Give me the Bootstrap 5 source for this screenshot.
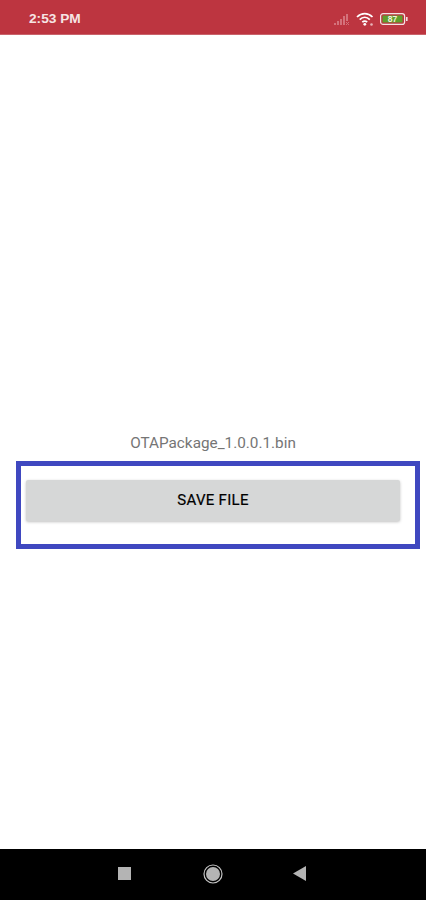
<!DOCTYPE html>
<html lang="en">
<head>
    <meta charset="UTF-8">
    <meta name="viewport" content="width=device-width, initial-scale=1.0">
    <link href="https://cdn.jsdelivr.net/npm/bootstrap@5.3.0/dist/css/bootstrap.min.css" rel="stylesheet">
    <title>Save File</title>

    <style>
        html, body { height: 900px; overflow: hidden; }
        body { font-family: Roboto, "Liberation Sans", sans-serif; background: #fff; }
        .phone { height: 900px; }
        .status-strip {
            height: 35px;
            background: #bd3540;
            color: #f6e4e4;
            font-family: "Liberation Sans", Arial, sans-serif;
            font-size: 13.7px;
            font-weight: 700;
            padding: 4px 18px 0 29px;
            border-bottom: 1px solid #c9636b;
        }
        .status-icons { gap: 5px; }
        .main-area { height: 814px; padding-top: 398px; }
        .file-name { color: #757575; font-size: 15.3px; font-weight: 400; line-height: 20px; height: 28px; }
        .focus-box {
            width: 404px;
            height: 88px;
            margin-left: 16px;
            border: 5px solid #3f48c0;
            padding: 14px 15px 0 5px;
        }
        .save-btn {
            height: 41px;
            background: #d6d7d7;
            border: 0;
            border-radius: 2px;
            box-shadow: 0 1px 3px rgba(0, 0, 0, .25);
            color: #000;
            font-size: 15px;
            font-weight: 400;
            letter-spacing: .3px;
            -webkit-text-stroke: .2px #000;
        }
        .nav-strip { height: 51px; background: #000; padding: 0 120px 2px 118px; }
        .nav-home { margin-left: 2px; }
    </style>
</head>
<body>
<div class="phone d-flex flex-column">
    <div class="status-strip d-flex align-items-center justify-content-between">
        <span>2:53 PM</span>
        <div class="status-icons d-flex align-items-center">
            <svg width="17" height="13" viewBox="0 0 17 13">
                <g fill="#d4727b">
                    <rect x="0" y="10" width="2" height="2"/>
                    <rect x="3" y="8" width="2" height="4"/>
                    <rect x="6" y="6" width="2" height="6"/>
                    <rect x="9" y="3" width="2" height="9"/>
                    <rect x="12" y="1" width="2" height="7"/>
                </g>
                <path d="M12 9l3 3M15 9l-3 3" stroke="#d4727b" stroke-width="1"/>
            </svg>
            <svg width="19" height="14" viewBox="0 0 19 14">
                <g fill="none" stroke="#fff" stroke-width="1.7">
                    <path d="M1 5c4.500-4.500 11-4.500 15.500 0"/>
                    <path d="M3.700 7.700c3-3 7.100-3 10.100 0"/>
                    <path d="M6.300 10.200c1.500-1.400 3.400-1.400 4.900 0"/>
                </g>
                <circle cx="8.800" cy="12.300" r="1.400" fill="#fff"/>
                <circle cx="15.500" cy="12.500" r="1.300" fill="#e9b4b8"/>
            </svg>
            <svg width="28" height="12" viewBox="0 0 28 12">
                <rect x=".6" y=".6" width="24" height="10.800" rx="2.500" fill="none" stroke="#f4e3e3" stroke-width="1.200"/>
                <rect x="2.500" y="2.500" width="20" height="7" fill="#5f9e2c"/>
                <rect x="26" y="4" width="1.600" height="4" fill="#f4e3e3"/>
                <text x="12.500" y="9" text-anchor="middle" font-family="Liberation Sans, sans-serif" font-size="8.500" font-weight="700" fill="#f2f2dc">87</text>
            </svg>
        </div>
    </div>

    <div class="main-area">
        <div class="file-name text-center">OTAPackage_1.0.0.1.bin</div>
        <div class="focus-box">
            <button type="button" class="btn save-btn w-100 d-flex align-items-center justify-content-center">SAVE FILE</button>
        </div>
    </div>

    <div class="nav-strip d-flex align-items-center justify-content-between">
        <svg width="13" height="13" viewBox="0 0 13 13"><rect width="13" height="13" fill="#b4b4b4"/></svg>
        <svg class="nav-home" width="20" height="20" viewBox="0 0 20 20">
            <circle cx="10" cy="10" r="9" fill="none" stroke="#c4c4c4" stroke-width="1.200"/>
            <circle cx="10" cy="10" r="7" fill="#b4b4b4"/>
        </svg>
        <svg width="13" height="15" viewBox="0 0 13 15"><path d="M13 0v15L0 7.500z" fill="#b4b4b4"/></svg>
    </div>
</div>
<script src="https://cdn.jsdelivr.net/npm/bootstrap@5.3.0/dist/js/bootstrap.bundle.min.js"></script>
</body>
</html>
